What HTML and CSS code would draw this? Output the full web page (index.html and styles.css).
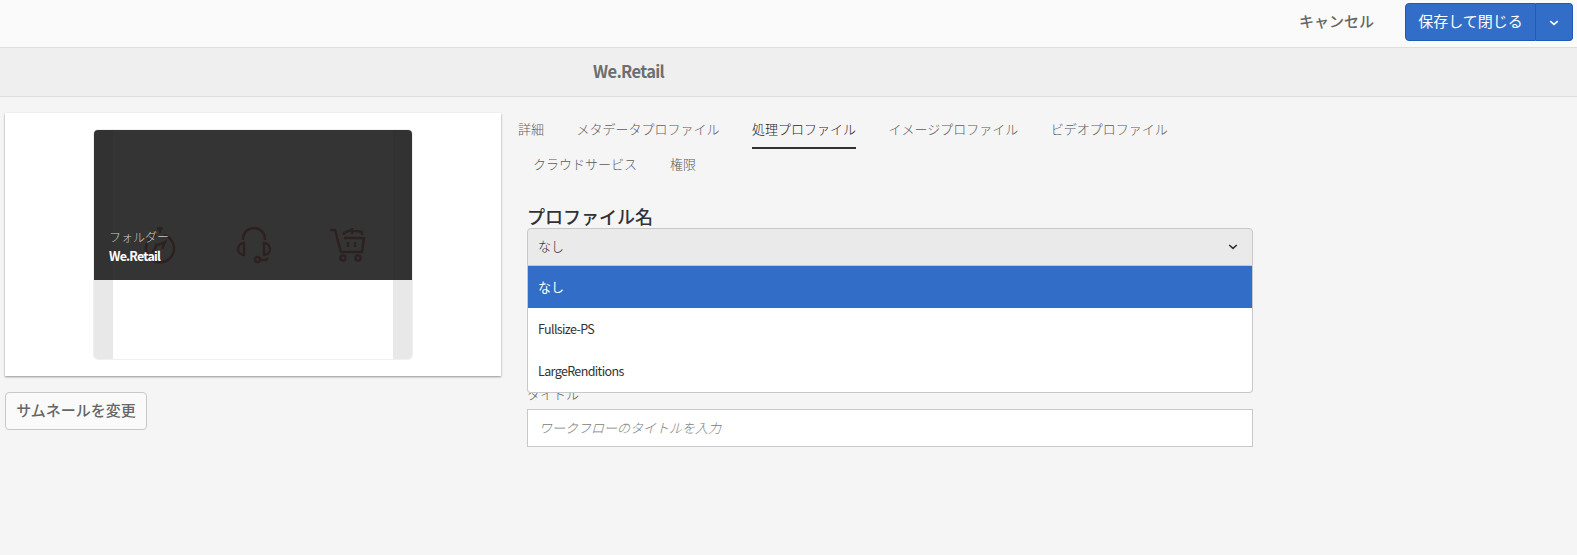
FILE: index.html
```html
<!DOCTYPE html>
<html lang="ja">
<head>
<meta charset="utf-8">
<title>We.Retail</title>
<link rel="stylesheet" href="styles.css">
</head>
<body>
<header class="actions">
  <button class="cancel">キャンセル</button>
  <div class="split">
    <button class="save">保存して閉じる</button>
    <button class="more" aria-label="その他"><svg width="10" height="6" viewBox="0 0 10 6"><path d="M1.2 1.2 5 4.4 8.8 1.2"/></svg></button>
  </div>
</header>
<div class="titlebar"><h1>We.Retail</h1></div>
<main class="content">
  <aside class="side">
    <div class="panel">
      <div class="card">
        <div class="thumb">
          <svg class="art" width="318" height="150" viewBox="0 0 318 150">
            <g transform="translate(50 97)">
              <path d="M13 1.500h6M16 1v5M12 8a14 14 0 1 0 8 0M9.500 25.500l3.500-9M8 24l4 2M14 18l7-3-3 7"/>
            </g>
            <g transform="translate(143 97)">
              <path d="M6 13V12a11 11 0 0 1 22 0v1M7 16v12a6 6 0 0 1 0-12zM27 16v12a6 6 0 0 0 0-12zM23 33h6l2-2"/><circle cx="20.500" cy="32.500" r="2.500"/>
            </g>
            <g transform="translate(236 97)">
              <path d="M0 3h5l6 22h21l2-14H14M14 8V6l7-3 11 2v3M22 1v6M18 15v5M25 15v5"/><circle cx="13" cy="31" r="2.600"/><circle cx="28" cy="31" r="2.600"/>
            </g>
          </svg>
          <div class="caption"><span class="kind">フォルダー</span><span class="name">We.Retail</span></div>
        </div>
        <div class="page"></div>
      </div>
    </div>
    <button class="change">サムネールを変更</button>
  </aside>
  <section class="main">
    <nav class="tabs">
      <a>詳細</a><a>メタデータプロファイル</a><a class="on">処理プロファイル</a><a>イメージプロファイル</a><a>ビデオプロファイル</a>
    </nav>
    <nav class="tabs second"><a>クラウドサービス</a><a>権限</a></nav>
    <div class="form">
      <h2>プロファイル名</h2>
      <div class="select">
        <div class="value"><span>なし</span><svg width="10" height="6" viewBox="0 0 10 6"><path d="M1.2 1 5 4.400 8.800 1"/></svg></div>
        <ul class="menu"><li class="picked">なし</li><li class="latin">Fullsize-PS</li><li class="latin">LargeRenditions</li></ul>
      </div>
      <label for="title">タイトル</label>
      <input id="title" placeholder="ワークフローのタイトルを入力">
    </div>
  </section>
</main>
</body>
</html>
```
FILE: styles.css
```css
* { box-sizing: border-box; margin: 0; padding: 0; }
body {
  height: 555px;
  overflow: hidden;
  background: #f5f5f5;
  color: #323232;
  font: 300 13px/20px "Noto Sans CJK JP", sans-serif;
}
button, input { font-family: inherit; }
svg { fill: none; stroke: currentColor; }
.actions {
  display: flex;
  justify-content: flex-end;
  height: 48px;
  padding: 3px 4px 0 0;
  background: #fafafa;
  border-bottom: 1px solid #dedede;
}
.cancel {
  height: 38px;
  margin-right: 31px;
  padding-bottom: 4px;
  border: 0;
  background: none;
  color: #666;
  font-size: 15px;
  font-weight: 500;
}
.split { display: flex; width: 168px; height: 38px; }
.split button { border: 1px solid #2259b8; background: #326ec8; color: #fff; font-size: 15px; }
.split .save { width: 131px; padding-bottom: 4px; border-radius: 4px 0 0 4px; }
.split .more { width: 37px; border-left: 0; border-radius: 0 4px 4px 0; }
.more svg { display: block; margin: 2px auto 0; stroke-width: 1.6; }
.titlebar {
  height: 49px;
  padding-left: 593px;
  background: #efefef;
  border-bottom: 1px solid #dedede;
}
h1 { color: #6e6e6e; font-size: 16.5px; line-height: 47px; font-weight: 700; letter-spacing: -.65px; }
.content { display: flex; padding: 16px 0 0 5px; }
.side { width: 496px; }
.panel {
  height: 263px;
  padding: 17px 89px 0;
  background: #fff;
  box-shadow: 0 1px 2px rgba(0, 0, 0, .4);
}
.card { width: 318px; height: 229px; border-radius: 4px; overflow: hidden; box-shadow: 0 0 0 1px #f0f0f0; }
.thumb {
  display: grid;
  height: 150px;
  background: linear-gradient(90deg, #323232 19px, #343434 19px 299px, #323232 299px);
}
.thumb > * { grid-area: 1 / 1; }
.art { color: #2d2020; stroke-width: 2.4; }
.caption { display: flex; flex-direction: column; justify-content: flex-end; padding: 0 0 14px 15px; z-index: 1; }
.kind { color: #c8c8c8; font-size: 12px; line-height: 19px; }
.name { color: #fff; font-size: 12.5px; line-height: 20px; font-weight: 700; letter-spacing: -.8px; }
.page { height: 79px; background: #fff; border: solid #e8e8e8; border-width: 0 19px; }
.change {
  width: 142px;
  height: 38px;
  margin-top: 16px;
  padding-bottom: 3px;
  border: 1px solid #c8c8c8;
  border-radius: 4px;
  background: #fafafa;
  color: #666;
  font-size: 15px;
  font-weight: 500;
}
.main { padding-left: 17px; }
.tabs { display: flex; gap: 32.5px; height: 36px; color: #5c5c5c; }
.tabs a { line-height: 32px; white-space: nowrap; }
.tabs .on { color: #1e1e1e; border-bottom: 2px solid #323232; }
.second { padding-left: 15px; gap: 33px; }
.second a { line-height: 30px; }
.form { width: 726px; margin-left: 9px; padding-top: 18px; }
h2 { height: 25px; font-size: 18px; line-height: 26px; font-weight: 500; }
.select { position: relative; color: #323232; }
.value {
  display: flex;
  align-items: center;
  justify-content: space-between;
  height: 38px;
  padding: 0 14px 2px 10px;
  border: 1px solid #c8c8c8;
  border-radius: 4px 4px 0 0;
  background: #eaeaea;
}
.value svg { margin-top: 2px; stroke-width: 1.6; }
.menu {
  position: absolute;
  top: 38px;
  left: 0;
  right: 0;
  list-style: none;
  background: #fff;
  border: 1px solid #c8c8c8;
  border-top: 0;
  border-radius: 0 0 4px 4px;
}
.menu li { height: 42px; padding-left: 10px; line-height: 42px; }
.menu .picked { background: #326ec8; color: #fff; font-weight: 400; }
.menu .latin { font-size: 12.5px; font-weight: 400; letter-spacing: -.63px; }
label { display: block; margin-top: 118px; color: #5c5c5c; }
input {
  display: block;
  width: 726px;
  height: 38px;
  margin-top: 5px;
  padding: 0 11px 1px;
  border: 1px solid #c8c8c8;
  background: #fff;
  font-size: 13px;
}
input::placeholder { color: #7c7c7c; font-style: italic; font-weight: 300; }
```
